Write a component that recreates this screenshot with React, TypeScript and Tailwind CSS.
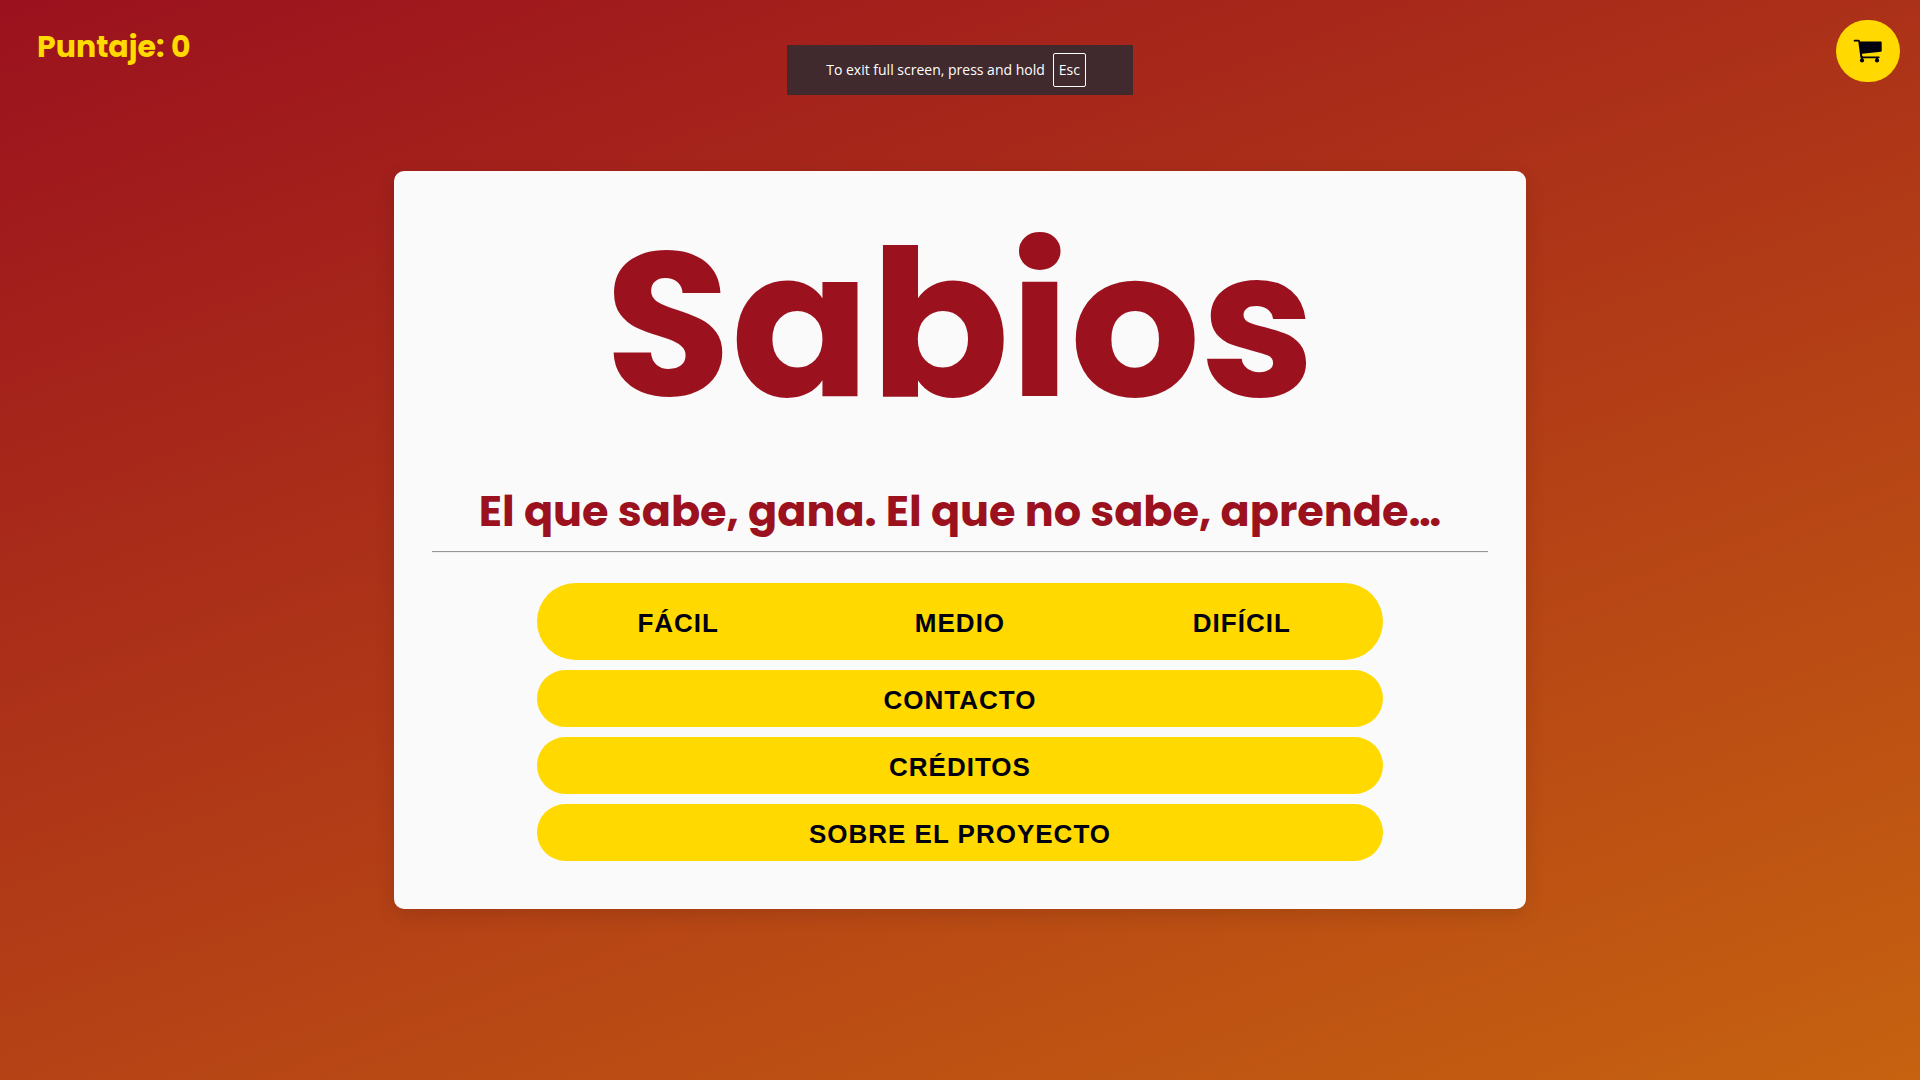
const levels = ["Fácil", "Medio", "Difícil"];
const links = ["Contacto", "Créditos", "Sobre el proyecto"];

function CartIcon() {
  return (
    <svg width="30" height="24" viewBox="0 0 30 24" fill="currentColor" aria-hidden="true">
      <path d="M1.5 .8H5.6Q6.7 .8 6.9 1.9L7 2.6H27.9Q28.7 2.6 28.7 3.4V12Q28.7 12.7 28 12.8L9 14.8L9.3 17.6H25.8Q26.6 17.6 26.6 18.4Q26.6 19.2 25.8 19.2H8.2Q7.5 19.2 7.4 18.4L5.3 2.6H1.5Q.7 2.6 .7 1.7Q.7 .8 1.5 .8Z" />
      <path d="M8 17.6h2v4h-2zM23 18h2v3h-2z" />
      <circle cx="9" cy="21.4" r="2.1" />
      <circle cx="24" cy="21.4" r="2.1" />
    </svg>
  );
}

export default function App() {
  return (
    <div className="relative flex min-h-screen flex-col items-center justify-center bg-[linear-gradient(160deg,#9b111e,#c66210)] font-[Poppins,Inter,sans-serif] text-[#000011]">
      <header className="absolute inset-x-0 top-0 flex items-start justify-between py-5 pr-5 pl-[37px]">
        <p className="pt-[9px] text-3xl font-bold text-[#ffd900]">Puntaje: 0</p>
        <button
          type="button"
          aria-label="Tienda"
          className="flex h-[62px] w-16 items-center justify-center rounded-full bg-[#ffd900]"
        >
          <CartIcon />
        </button>
      </header>

      <div
        role="status"
        className="absolute inset-x-0 top-[45px] mx-auto flex h-[50px] w-[346px] items-center justify-center gap-2 bg-[#402a2e] pr-2 font-['Open_Sans',sans-serif] text-sm text-white"
      >
        <span>To exit full screen, press and hold</span>
        <kbd className="flex h-[34px] w-[33px] items-center justify-center rounded-xs border border-white font-['Open_Sans',sans-serif] text-sm">
          Esc
        </kbd>
      </div>

      <main className="flex w-[59%] flex-col rounded-[10px] bg-[#fafafa] px-[38px] pb-12 shadow-[0_6px_20px_rgba(0,0,0,0.12)]">
        <h1 className="text-center text-[205px] leading-[307px] font-bold text-[#9b111e]">Sabios</h1>
        <h2 className="text-center text-[43px] leading-[67px] font-bold text-[#9b111e]">
          El que sabe, gana. El que no sabe, aprende…
        </h2>
        <hr className="mt-1.5 border-t border-b border-t-[#929898] border-b-[#eeeeee]" />
        <nav className="mx-auto mt-[30px] flex w-4/5 flex-col gap-2.5 font-['Liberation_Sans',Arial,sans-serif] text-[26px] font-bold tracking-[1px] uppercase">
          <div className="grid h-[77px] grid-cols-3 rounded-[40px] bg-[#ffd900]">
            {levels.map((level) => (
              <button type="button" key={level} className="pt-1 font-bold tracking-[1px] uppercase">
                {level}
              </button>
            ))}
          </div>
          {links.map((link) => (
            <a
              href="#"
              key={link}
              className="flex h-[57px] items-center justify-center rounded-[30px] bg-[#ffd900] pt-1"
            >
              {link}
            </a>
          ))}
        </nav>
      </main>
    </div>
  );
}
